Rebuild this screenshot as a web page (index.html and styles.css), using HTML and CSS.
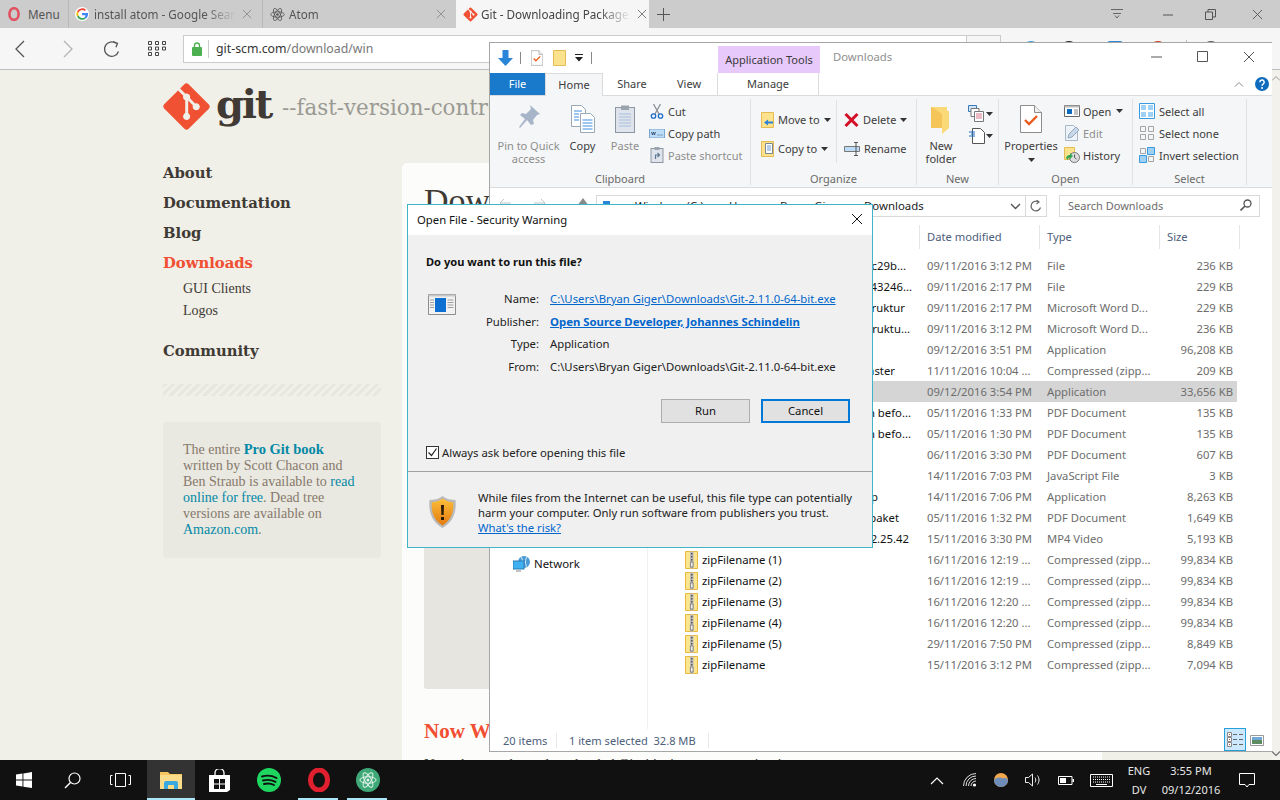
FILE: index.html
```html
<!DOCTYPE html>
<html lang="en">
<head>
<meta charset="utf-8">
<title>Git - Downloading Package</title>
<link rel="stylesheet" href="styles.css">
</head>
<body>
<svg class="defs" xmlns="http://www.w3.org/2000/svg">
  <symbol id="gitlogo" viewBox="0 0 97 97"><path fill="#f05133" d="M92.71 44.408 52.591 4.291c-2.31-2.311-6.057-2.311-8.369 0l-8.33 8.332L46.459 23.19c2.456-.83 5.272-.273 7.229 1.685 1.969 1.97 2.521 4.81 1.67 7.275l10.186 10.185c2.465-.85 5.307-.3 7.275 1.671 2.75 2.75 2.75 7.206 0 9.958-2.752 2.751-7.208 2.751-9.961 0-2.068-2.07-2.58-5.11-1.531-7.658l-9.5-9.499v24.997c.67.332 1.303.774 1.861 1.332 2.75 2.75 2.75 7.206 0 9.959-2.75 2.749-7.209 2.749-9.957 0-2.75-2.754-2.75-7.21 0-9.959.68-.679 1.467-1.193 2.307-1.537v-25.23c-.84-.344-1.625-.853-2.307-1.537-2.083-2.082-2.584-5.14-1.516-7.698L31.798 16.715 4.288 44.222c-2.311 2.313-2.311 6.06 0 8.371l40.121 40.118c2.31 2.311 6.056 2.311 8.369 0L92.71 52.779c2.311-2.311 2.311-6.06 0-8.371z"/></symbol>
  <symbol id="close" viewBox="0 0 12 12"><path d="M1 1l10 10M11 1L1 11" fill="none" stroke="currentColor" stroke-width="1"/></symbol>
  <symbol id="atom" viewBox="0 0 20 20"><g fill="none" stroke="currentColor" stroke-width="1.1"><ellipse cx="10" cy="10" rx="9" ry="3.6"/><ellipse cx="10" cy="10" rx="9" ry="3.6" transform="rotate(60 10 10)"/><ellipse cx="10" cy="10" rx="9" ry="3.6" transform="rotate(120 10 10)"/></g><circle cx="10" cy="10" r="1.7" fill="currentColor"/></symbol>
  <symbol id="zip" viewBox="0 0 13 18"><path d="M.5.5h12v17H.5z" fill="#fbe58f" stroke="#e8b93c"/><path d="M5 .5h3.500v17H5z" fill="#b9b9b9"/><path d="M6 2h1.500v1.600H6zM6 5h1.500v1.600H6zM6 8h1.500v1.600H6z" fill="#555"/><path d="M5.400 11h2.700v5H5.400z" fill="#eee" stroke="#666" stroke-width=".7"/></symbol>
  <symbol id="caret" viewBox="0 0 7 4"><path d="M0 0h7L3.500 4z" fill="#333"/></symbol>
  <symbol id="doccheck" viewBox="0 0 22 28"><path d="M.5.5h14l7 7v20H.5z" fill="#fff" stroke="#8d8d8d"/><path d="M14.500.5v7h7" fill="#eee" stroke="#8d8d8d"/><path d="M5 15l4 4 8-8" fill="none" stroke="#ea5b1c" stroke-width="2.400"/></symbol>
</svg>

<header class="tabstrip">
  <div class="tab tab-menu">
    <svg class="opera-s" width="12" height="14" viewBox="0 0 12 14"><ellipse cx="6" cy="7" rx="4.600" ry="5.800" fill="none" stroke="#e0525f" stroke-width="2.600"/></svg>
    <span class="tab-menu-label">Menu</span>
  </div>
  <div class="tab tab-page">
    <svg class="fav" width="14" height="14" viewBox="0 0 14 14"><circle cx="7" cy="7" r="7" fill="#fff"/><path d="M7 3a4 4 0 0 1 2.700 1L11 2.700A6 6 0 0 0 2 4.300L3.500 5.500A4 4 0 0 1 7 3z" fill="#ea4335"/><path d="M3.500 5.500 2 4.300a6 6 0 0 0 0 5.400l1.500-1.200a4 4 0 0 1 0-3z" fill="#fbbc05"/><path d="M3.500 8.500 2 9.700a6 6 0 0 0 8.800 1.900L9.400 10.400A4 4 0 0 1 3.500 8.500z" fill="#34a853"/><path d="M13 6H7v2.300h3.400a3 3 0 0 1-1 2.100l1.400 1.200A6 6 0 0 0 13 6z" fill="#4285f4"/></svg>
    <span class="tab-title">install atom - Google Search</span>
    <svg class="tab-x" width="10" height="10"><use href="#close"/></svg>
  </div>
  <div class="tab tab-page">
    <svg class="fav fav-atom" width="15" height="15"><use href="#atom"/></svg>
    <span class="tab-title">Atom</span>
    <svg class="tab-x" width="10" height="10"><use href="#close"/></svg>
  </div>
  <div class="tab tab-page tab-active">
    <svg class="fav fav-git" width="15" height="15"><use href="#gitlogo"/></svg>
    <span class="tab-title">Git - Downloading Package</span>
    <svg class="tab-x" width="10" height="10"><use href="#close"/></svg>
  </div>
  <svg class="tab-plus" width="13" height="13" viewBox="0 0 13 13"><path d="M6.500 0v13M0 6.500h13" stroke="#555" fill="none"/></svg>
  <div class="strip-controls">
    <svg class="sc-a" width="14" height="14" viewBox="0 0 14 14"><path d="M1 2.500h12M3 6.500h8M5 8.500l2 2.500 2-2.500" fill="none" stroke="#666"/></svg>
    <svg class="sc-b" width="11" height="11" viewBox="0 0 11 11"><path d="M1 6h10" stroke="#555" fill="none"/></svg>
    <svg class="sc-c" width="11" height="11" viewBox="0 0 11 11"><path d="M.5 3h7v7.500h-7zM3 3V.5h7.500V8H7.500" stroke="#555" fill="none"/></svg>
    <svg class="sc-d" width="11" height="11"><use href="#close"/></svg>
  </div>
</header>

<nav class="toolbar">
  <svg class="tb-back" width="12" height="18" viewBox="0 0 12 18"><path d="M10 1L2 9l8 8" fill="none" stroke="#555" stroke-width="1.300"/></svg>
  <svg class="tb-fwd" width="12" height="18" viewBox="0 0 12 18"><path d="M2 1l8 8-8 8" fill="none" stroke="#b5b5b5" stroke-width="1.300"/></svg>
  <svg class="tb-reload" width="18" height="18" viewBox="0 0 18 18"><path d="M15.500 11.500A7.200 7.200 0 1 1 13 3.300" fill="none" stroke="#555" stroke-width="1.300"/><path d="M10 1.500l4.500 1.800-1.500 4" fill="none" stroke="#555" stroke-width="1.300"/></svg>
  <svg class="tb-grid" width="18" height="15" viewBox="0 0 18 15"><g fill="none" stroke="#444"><path d="M.5.500h3v3h-3zM7.500.5h3v3h-3zM14.500.5h3v3h-3zM.5 6h3v3h-3zM7.500 6h3v3h-3zM14.500 6h3v3h-3zM.5 11.500h3v3h-3zM7.500 11.500h3v3h-3z"/></g></svg>
  <div class="addr">
    <svg class="lock" width="10" height="14" viewBox="0 0 10 14"><path d="M2.500 6V3.500a2.500 2.500 0 0 1 5 0V6" fill="none" stroke="#4caf50" stroke-width="1.300"/><rect y="5" width="10" height="9" rx="1" fill="#4caf50"/></svg>
    <span class="addr-sep"></span>
    <span class="addr-host">git-scm.com</span><span class="addr-path">/download/win</span>
    <svg class="addr-dot" width="14" height="14" viewBox="0 0 14 14"><circle cx="7" cy="7" r="6" fill="#2e86d0"/></svg>
  </div>
  <div class="addr-box"><svg width="20" height="14" viewBox="0 0 20 14"><path d="M1 7c3-6 15-6 18 0" fill="none" stroke="#555" stroke-width="1.500"/></svg></div>
  <div class="ext-icons">
    <span class="ext ext-a"></span><span class="ext ext-b"></span><span class="ext ext-c"></span><span class="ext ext-d"></span><span class="ext-sep"></span><span class="ext ext-e"></span>
  </div>
</nav>

<main class="page">
  <aside class="side">
    <div class="brand">
      <svg class="brand-logo" width="49" height="49"><use href="#gitlogo"/></svg>
      <span class="wordmark">git</span>
      <span class="tagline">--fast-version-control</span>
    </div>
    <ul class="side-nav">
      <li>About</li>
      <li>Documentation</li>
      <li>Blog</li>
      <li class="cur">Downloads</li>
      <li class="sub">GUI Clients</li>
      <li class="sub">Logos</li>
      <li class="comm">Community</li>
    </ul>
    <div class="stripe"></div>
    <div class="book">The entire <a class="strong">Pro Git book</a> written by Scott Chacon and Ben Straub is available to <a>read online for free</a>. Dead tree versions are available on <a>Amazon.com</a>.</div>
  </aside>
  <section class="card">
    <h1>Downloading Git</h1>
    <div class="grey-box"></div>
    <h2>Now What?</h2>
    <p>Now that you have downloaded Git, it's time to start using it.</p>
  </section>
  <div class="page-rest"></div>
  <div class="scroll">
    <svg width="8" height="5" viewBox="0 0 8 5"><path d="M0 4.500l4-4 4 4" fill="none" stroke="#999"/></svg>
    <svg width="8" height="5" viewBox="0 0 8 5"><path d="M0 .5l4 4 4-4" fill="none" stroke="#777" stroke-width="1.300"/></svg>
  </div>
</main>

<footer class="taskbar">
  <div class="tb-item">
    <svg width="16" height="16" viewBox="0 0 16 16"><path d="M0 2.400 6.500 1.500V7.500H0zM7.400 1.400 16 0V7.500H7.400zM0 8.500H6.500V14.500L0 13.600zM7.400 8.500H16V16L7.400 14.700z" fill="#fff"/></svg>
  </div>
  <div class="tb-item">
    <svg width="17" height="17" viewBox="0 0 17 17"><circle cx="10.500" cy="6.500" r="5.500" fill="none" stroke="#fff" stroke-width="1.200"/><path d="M6.500 10.500 1 16" stroke="#fff" stroke-width="1.400"/></svg>
  </div>
  <div class="tb-item">
    <svg width="21" height="14" viewBox="0 0 21 14"><path d="M5.500.5h10v13h-10zM2.500 2.500H.5v9h2M18.500 2.500h2v9h-2" fill="none" stroke="#fff"/></svg>
  </div>
  <div class="tb-item tb-active">
    <svg width="22" height="19" viewBox="0 0 22 19"><path d="M0 1h8l2 2h12v15H0z" fill="#f5c65f"/><path d="M0 4h22v14H0z" fill="#fbdc8a"/><path d="M4 18v-6a2 2 0 0 1 2-2h10a2 2 0 0 1 2 2v6h-4v-4H8v4z" fill="#39a9e0"/></svg>
  </div>
  <div class="tb-item">
    <svg width="21" height="23" viewBox="0 0 21 23"><path d="M0 6h21v15L18 23H0z" fill="#fff"/><path d="M6 8V4a4.500 4.500 0 0 1 9 0v4" fill="none" stroke="#fff" stroke-width="1.300"/><path d="M5 10h5v4.500H5zM11 10h5v4.500h-5zM5 15.500h5V20H5zM11 15.500h5V20h-5z" fill="#111"/></svg>
  </div>
  <div class="tb-item tb-wide">
    <svg width="24" height="24" viewBox="0 0 24 24"><circle cx="12" cy="12" r="12" fill="#1ed760"/><path d="M5 8.500c5-1.500 10-1 14.500 1.500M6 12.500c4.500-1.200 8.500-.8 12.500 1.300M7 16c3.500-.9 7-.6 10 1" fill="none" stroke="#111" stroke-width="1.900" stroke-linecap="round"/></svg>
  </div>
  <div class="tb-item tb-run">
    <svg width="22" height="24" viewBox="0 0 22 24"><ellipse cx="11" cy="12" rx="8.500" ry="10" fill="none" stroke="#e0202e" stroke-width="5"/></svg>
  </div>
  <div class="tb-item tb-run">
    <svg class="tb-atom" width="24" height="24" viewBox="0 0 24 24"><circle cx="12" cy="12" r="12" fill="#3fa877"/><svg x="3" y="3" width="18" height="18"><use href="#atom"/></svg></svg>
  </div>
  <div class="tray">
    <svg class="t-a" width="14" height="9" viewBox="0 0 14 9"><path d="M1 8l6-6 6 6" fill="none" stroke="#fff" stroke-width="1.200"/></svg>
    <svg class="t-b" width="14" height="14" viewBox="0 0 14 14"><g fill="none" stroke="#ddd"><path d="M.5 13A12.500 12.500 0 0 1 13 .5M3 13A10 10 0 0 1 13 3M5.500 13A7.500 7.500 0 0 1 13 5.500M8 13A5 5 0 0 1 13 8"/></g><circle cx="11.500" cy="12" r="1.600" fill="#fff"/></svg>
    <svg class="t-c" width="16" height="16" viewBox="0 0 16 16"><circle cx="8" cy="8" r="7" fill="#f2a94e"/><path d="M1 8a7 7 0 0 0 14 0c-2-2-3-3-5-1.500C8 5 4 5 1 8z" fill="#6e8dbb"/></svg>
    <svg class="t-d" width="17" height="14" viewBox="0 0 17 14"><path d="M.5 4.500h3l4-3.500v12l-4-3.500h-3zM10 4.500c1 1.500 1 3.500 0 5M12.500 2.500c2 3 2 6 0 9" fill="none" stroke="#eee"/></svg>
    <svg class="t-e" width="16" height="9" viewBox="0 0 16 9"><path d="M.5.500h13.500v8H.5z" fill="none" stroke="#fff"/><path d="M2 2h6v5H2z" fill="#fff"/><path d="M14.500 3H16v3h-1.500z" fill="#fff"/></svg>
    <svg class="t-f" width="23" height="13" viewBox="0 0 23 13"><path d="M.5.500h22v12H.5z" fill="none" stroke="#fff"/><path d="M3 3h17M3 5.500h17M3 8h17" stroke="#fff" stroke-dasharray="1 1"/><path d="M6 10.500h11" stroke="#fff"/></svg>
    <div class="t-lang"><span>ENG</span><span>DV</span></div>
    <div class="t-clock"><span>3:55 PM</span><span>09/12/2016</span></div>
    <svg class="t-n" width="16" height="15" viewBox="0 0 16 15"><path d="M.5.500h15v11H10l-2 2.500-2-2.500H.5z" fill="none" stroke="#fff"/></svg>
  </div>
</footer>

<!-- File Explorer window -->
<section class="explorer">
  <div class="ex-title">
    <div class="qat">
      <svg class="q-arrow" width="15" height="16" viewBox="0 0 15 16"><path d="M4.500 0h6v8H15l-7.500 8L0 8h4.500z" fill="#2a84d8"/></svg>
      <span class="q-sep"></span>
      <svg class="q-doc" width="12" height="16"><use href="#doccheck"/></svg>
      <svg class="q-fold" width="13" height="16" viewBox="0 0 13 16"><path d="M.5.500h12v15H.5z" fill="#fde28d" stroke="#e3bd54"/></svg>
      <svg class="q-drop" width="8" height="8" viewBox="0 0 8 8"><path d="M0 0h8v1H0zM0 3h8L4 7.500z" fill="#222"/></svg>
      <span class="q-sep q-sep2"></span>
    </div>
    <div class="ctx-label">Application Tools</div>
    <div class="win-name">Downloads</div>
    <div class="win-ctl">
      <svg width="11" height="11" viewBox="0 0 11 11"><path d="M0 6h11" stroke="#555" fill="none"/></svg>
      <svg width="11" height="11" viewBox="0 0 11 11"><path d="M.5.500h10v10H.5z" stroke="#555" fill="none"/></svg>
      <svg class="ex-x" width="12" height="12"><use href="#close"/></svg>
    </div>
  </div>
  <div class="ex-tabs">
    <span class="rt rt-file">File</span>
    <span class="rt rt-home">Home</span>
    <span class="rt rt-share">Share</span>
    <span class="rt rt-view">View</span>
    <span class="rt rt-manage">Manage</span>
    <svg class="rt-up" width="10" height="6" viewBox="0 0 10 6"><path d="M1 5.500l4-4 4 4" fill="none" stroke="#888"/></svg>
    <svg class="rt-help" width="14" height="14" viewBox="0 0 14 14"><circle cx="7" cy="7" r="7" fill="#0f6cbd"/><path d="M4.800 5.200a2.200 2.200 0 1 1 3.300 1.900c-.8.500-1.100.8-1.100 1.700" fill="none" stroke="#fff" stroke-width="1.500"/><circle cx="7" cy="11" r="1" fill="#fff"/></svg>
  </div>
  <div class="ribbon">
    <div class="grp grp-clip">
      <div class="grp-body">
        <div class="big big-pin dim">
          <div class="big-ic"><svg width="22" height="24" viewBox="0 0 22 24"><path d="M12 0l10 9-3 1-4 5 1 4-3 1-4-5-7 8-1-1 6-8-5-4 2-2 4 1 5-5z" fill="#a7b5c9"/></svg></div>
          <span>Pin to Quick</span><span>access</span>
        </div>
        <div class="big big-copy">
          <div class="big-ic"><svg width="24" height="28" viewBox="0 0 24 28"><path d="M.5.500h10l4 4v17H.5z" fill="#fff" stroke="#9aa7b5"/><path d="M9.500 8.500h10l4 4v15h-14z" fill="#fff" stroke="#9aa7b5"/><path d="M3 6h8M3 9h5M3 12h5M3 15h5M11.500 15h10M11.500 18h10M11.500 21h10M11.500 24h10" stroke="#3f8fe0"/></svg></div>
          <span>Copy</span>
        </div>
        <div class="big big-paste dim">
          <div class="big-ic"><svg width="20" height="28" viewBox="0 0 20 28"><rect x=".5" y="2.500" width="19" height="25" fill="#dfe4ec" stroke="#8d97a3"/><rect x="6" y=".5" width="8" height="4.500" fill="#9ba4ae"/><path d="M4 9h12M4 12h12M4 15h12M4 18h12M4 21h12" stroke="#a9bddb"/></svg></div>
          <span>Paste</span>
        </div>
        <div class="small-list">
          <div class="sm"><svg width="15" height="16" viewBox="0 0 15 16"><path d="M4 1l5.500 10M11 1L5.500 11" stroke="#8a8f96" stroke-width="1.300" fill="none"/><circle cx="4" cy="13" r="2.200" fill="none" stroke="#1e6fc8" stroke-width="1.300"/><circle cx="11" cy="13" r="2.200" fill="none" stroke="#1e6fc8" stroke-width="1.300"/></svg><span>Cut</span></div>
          <div class="sm"><svg width="15" height="9" viewBox="0 0 15 9"><rect width="15" height="9" fill="#bcdcf7" stroke="#7aa7d0"/><path d="M2 3l1 3 1-3 1 3 1-3M8 6h1M10 6h1M12 6h1" stroke="#25405e" fill="none" stroke-width=".8"/></svg><span>Copy path</span></div>
          <div class="sm dim"><svg width="13" height="16" viewBox="0 0 13 16"><rect x=".5" y="1.500" width="12" height="14" fill="#dfe4ec" stroke="#8d97a3"/><rect x="4" width="5" height="3" fill="#9ba4ae"/><path d="M5 12V8h4M7 6l2 2-2 2" stroke="#5d7895" fill="none" stroke-width="1.200"/></svg><span>Paste shortcut</span></div>
        </div>
      </div>
      <div class="grp-label">Clipboard</div>
    </div>
    <div class="grp grp-org">
      <div class="grp-body">
        <div class="org-col org-a">
          <div class="org"><svg width="13" height="16" viewBox="0 0 13 16"><path d="M.5.500h12v15H.5z" fill="#fde28d" stroke="#e3bd54"/><path d="M3 10.500l4-3v2h5v2H7v2z" fill="#2a84d8"/></svg><span>Move to</span><svg width="7" height="4"><use href="#caret"/></svg></div>
          <div class="org"><svg width="13" height="16" viewBox="0 0 13 16"><path d="M.5.500h12v15H.5z" fill="#fde28d" stroke="#e3bd54"/><path d="M4.500 2.500h7v10h-7z" fill="#fff" stroke="#7a8694"/><path d="M6 5h4M6 7h4M6 9h4" stroke="#6d9ad0"/></svg><span>Copy to</span><svg width="7" height="4"><use href="#caret"/></svg></div>
        </div>
        <div class="org-col org-b">
          <div class="org"><svg width="15" height="14" viewBox="0 0 15 14"><path d="M1.500 1l12 12M13.500 1l-12 12" stroke="#d3122a" stroke-width="3" fill="none"/></svg><span>Delete</span><svg width="7" height="4"><use href="#caret"/></svg></div>
          <div class="org"><svg width="16" height="14" viewBox="0 0 16 14"><path d="M.5 4.500h15v5H.5z" fill="#bcdcf7" stroke="#777"/><path d="M12 0v14M10 .5h4M10 13.500h4" stroke="#555" fill="none"/></svg><span>Rename</span></div>
        </div>
      </div>
      <div class="grp-label">Organize</div>
    </div>
    <div class="grp grp-new">
      <div class="grp-body">
        <div class="big big-new">
          <div class="big-ic big-ic-n"><svg width="20" height="27" viewBox="0 0 20 27"><path d="M0 0h16v4h2v17l-7 6V21H0z" fill="#fbd977"/><path d="M11 27V7L4 2 0 0v21h11" fill="#f5c55a"/></svg></div>
          <span>New</span><span>folder</span>
        </div>
        <div class="new-small">
          <div class="ns"><svg width="17" height="17" viewBox="0 0 17 17"><path d="M.5.500h8v6h-8z" fill="#cfe6fa" stroke="#3a7bb8"/><path d="M3 3.500h8v8H3z" fill="#fff" stroke="#777"/><path d="M6.500 6.500h9v10h-9z" fill="#fff" stroke="#777"/><path d="M8 9h6M8 11h6M8 13h6" stroke="#d9768b"/></svg><svg width="7" height="4"><use href="#caret"/></svg></div>
          <div class="ns"><svg width="17" height="16" viewBox="0 0 17 16"><path d="M4.500.5h8l4 4v11h-12z" fill="#fff" stroke="#555"/><path d="M1 4h6M3 6h4M1 8h6" stroke="#1e6fc8"/></svg><svg width="7" height="4"><use href="#caret"/></svg></div>
        </div>
      </div>
      <div class="grp-label">New</div>
    </div>
    <div class="grp grp-open">
      <div class="grp-body">
        <div class="big big-prop">
          <div class="big-ic"><svg width="22" height="28"><use href="#doccheck"/></svg></div>
          <span>Properties</span>
          <svg class="prop-caret" width="7" height="4"><use href="#caret"/></svg>
        </div>
        <div class="small-list">
          <div class="sm"><svg width="16" height="12" viewBox="0 0 16 12"><path d="M.5.500h15v11H.5z" fill="#fff" stroke="#666"/><path d="M.5.500h15v2H.5z" fill="#bbb"/><path d="M3 4h5v5H3z" fill="#0f6cbd"/><path d="M10 5h4M10 7h4M10 9h4" stroke="#888"/></svg><span>Open</span><svg class="sm-caret" width="7" height="4"><use href="#caret"/></svg></div>
          <div class="sm dim"><svg width="14" height="16" viewBox="0 0 14 16"><path d="M.5.500h8l4 4v11H.5z" fill="#eef3f9" stroke="#aab7c6"/><path d="M3 13l1-4 7-7 3 3-7 7z" fill="#c8d8ea" stroke="#93a8c0"/></svg><span>Edit</span></div>
          <div class="sm"><svg width="16" height="16" viewBox="0 0 16 16"><path d="M.5.500h10v12H.5z" fill="#fde28d" stroke="#e3bd54"/><circle cx="10.500" cy="10.500" r="5" fill="#ddd" stroke="#777"/><path d="M10.500 7.500v3l2 1.500" stroke="#555" fill="none"/><path d="M2 11a4 4 0 0 1 4-3v-2l3 3-3 3v-2a3 3 0 0 0-2 3z" fill="#2fa84f"/></svg><span>History</span></div>
        </div>
      </div>
      <div class="grp-label">Open</div>
    </div>
    <div class="grp grp-sel">
      <div class="grp-body">
        <div class="small-list">
          <div class="sm"><svg width="16" height="16" viewBox="0 0 16 16"><path d="M.5.500h15v15H.5z" fill="#fff" stroke="#3a9ae0"/><path d="M2 2h5v5H2zM9 2h5v5H9zM2 9h5v5H2zM9 9h5v5H9z" fill="#9fd0f5"/></svg><span>Select all</span></div>
          <div class="sm"><svg width="16" height="16" viewBox="0 0 16 16"><path d="M1.500 1.500h5v5h-5zM9.500 1.500h5v5h-5zM1.500 9.500h5v5h-5zM9.500 9.500h5v5h-5z" fill="none" stroke="#a5a5a5"/></svg><span>Select none</span></div>
          <div class="sm"><svg width="16" height="16" viewBox="0 0 16 16"><path d="M1.500 1.500h5v5h-5zM9.500 9.500h5v5h-5z" fill="none" stroke="#a5a5a5"/><path d="M8.500.5h7v7h-7zM.5 8.500h7v7h-7z" fill="#9fd0f5" stroke="#3a9ae0"/></svg><span>Invert selection</span></div>
        </div>
      </div>
      <div class="grp-label">Select</div>
    </div>
  </div>
  <div class="ex-nav">
    <svg class="nv-back" width="12" height="10" viewBox="0 0 12 10"><path d="M5 1L1 5l4 4M1 5h11" fill="none" stroke="#c4c4c4"/></svg>
    <svg class="nv-fwd" width="12" height="10" viewBox="0 0 12 10"><path d="M7 1l4 4-4 4M11 5H0" fill="none" stroke="#c4c4c4"/></svg>
    <svg class="nv-up" width="12" height="8" viewBox="0 0 12 8"><path d="M6 0l6 8H0z" fill="#8a8a8a"/></svg>
    <div class="path"><svg class="path-ic" width="7" height="10" viewBox="0 0 7 10"><rect width="7" height="10" fill="#2a84d8"/></svg><div class="crumb"><span>«</span><span>Windows (C:)</span><span>›</span><span>Users</span><span>›</span><span>Bryan Giger</span><span>›</span><span>Downloads</span></div><svg class="path-chev" width="11" height="7" viewBox="0 0 11 7"><path d="M1 1l4.500 4.500L10 1" fill="none" stroke="#555" stroke-width="1.400"/></svg></div>
    <div class="refresh"><svg width="12" height="12" viewBox="0 0 12 12"><path d="M10.500 7.500A4.800 4.800 0 1 1 8.500 2" fill="none" stroke="#666" stroke-width="1.200"/><path d="M6.500 0l2.500 2-2.500 2" fill="none" stroke="#666" stroke-width="1.200"/></svg></div>
    <div class="search"><span>Search Downloads</span><svg width="12" height="12" viewBox="0 0 12 12"><circle cx="7.500" cy="4.500" r="3.500" fill="none" stroke="#555" stroke-width="1.300"/><path d="M5 7L.5 11.500" stroke="#555" stroke-width="1.600"/></svg></div>
  </div>
  <div class="ex-main">
    <div class="pane">
      <div class="pane-item"><svg width="18" height="16" viewBox="0 0 18 16"><circle cx="11" cy="6" r="6" fill="#4a9ad4"/><path d="M8 1c2 2 2 8 0 10M14 1c-2 2-2 8 0 10" fill="none" stroke="#d6ecfa"/><rect y="5" width="11" height="8" fill="#3fb0f0" stroke="#2b7cb5"/><path d="M3 15h5" stroke="#888"/></svg><span>Network</span></div>
    </div>
    <div class="list">
      <div class="lhead"><span class="c-name"></span><span class="c-date">Date modified</span><span class="c-type">Type</span><span class="c-size">Size</span></div>
      <div class="rows">
        <div class="row"><span class="n e-1">report-c29b...</span><span>09/11/2016 3:12 PM</span><span>File</span><span class="s">236 KB</span></div>
        <div class="row"><span class="n e-2">report-43246...</span><span>09/11/2016 2:17 PM</span><span>File</span><span class="s">229 KB</span></div>
        <div class="row"><span class="n e-3">Laporan Struktur</span><span>09/11/2016 2:17 PM</span><span>Microsoft Word D...</span><span class="s">229 KB</span></div>
        <div class="row"><span class="n e-4">Laporan Struktu...</span><span>09/11/2016 3:12 PM</span><span>Microsoft Word D...</span><span class="s">236 KB</span></div>
        <div class="row"><span class="n e-5"></span><span>09/12/2016 3:51 PM</span><span>Application</span><span class="s">96,208 KB</span></div>
        <div class="row"><span class="n e-6">atom-master</span><span>11/11/2016 10:04 ...</span><span>Compressed (zipp...</span><span class="s">209 KB</span></div>
        <div class="row row-sel"><span class="n e-5"></span><span>09/12/2016 3:54 PM</span><span>Application</span><span class="s">33,656 KB</span></div>
        <div class="row"><span class="n e-7">Tugas pertemuan befo...</span><span>05/11/2016 1:33 PM</span><span>PDF Document</span><span class="s">135 KB</span></div>
        <div class="row"><span class="n e-7">Tugas pertemuan befo...</span><span>05/11/2016 1:30 PM</span><span>PDF Document</span><span class="s">135 KB</span></div>
        <div class="row"><span class="n e-5"></span><span>06/11/2016 3:30 PM</span><span>PDF Document</span><span class="s">607 KB</span></div>
        <div class="row"><span class="n e-5"></span><span>14/11/2016 7:03 PM</span><span>JavaScript File</span><span class="s">3 KB</span></div>
        <div class="row"><span class="n e-8">AtomSetup</span><span>14/11/2016 7:06 PM</span><span>Application</span><span class="s">8,263 KB</span></div>
        <div class="row"><span class="n e-9">Materi paket</span><span>05/11/2016 1:32 PM</span><span>PDF Document</span><span class="s">1,649 KB</span></div>
        <div class="row"><span class="n e-10">2016-11-15 22.25.42</span><span>15/11/2016 3:30 PM</span><span>MP4 Video</span><span class="s">5,193 KB</span></div>
        <div class="row"><span class="n z"><svg width="13" height="18"><use href="#zip"/></svg>zipFilename (1)</span><span>16/11/2016 12:19 ...</span><span>Compressed (zipp...</span><span class="s">99,834 KB</span></div>
        <div class="row"><span class="n z"><svg width="13" height="18"><use href="#zip"/></svg>zipFilename (2)</span><span>16/11/2016 12:19 ...</span><span>Compressed (zipp...</span><span class="s">99,834 KB</span></div>
        <div class="row"><span class="n z"><svg width="13" height="18"><use href="#zip"/></svg>zipFilename (3)</span><span>16/11/2016 12:20 ...</span><span>Compressed (zipp...</span><span class="s">99,834 KB</span></div>
        <div class="row"><span class="n z"><svg width="13" height="18"><use href="#zip"/></svg>zipFilename (4)</span><span>16/11/2016 12:20 ...</span><span>Compressed (zipp...</span><span class="s">99,834 KB</span></div>
        <div class="row"><span class="n z"><svg width="13" height="18"><use href="#zip"/></svg>zipFilename (5)</span><span>29/11/2016 7:50 PM</span><span>Compressed (zipp...</span><span class="s">8,849 KB</span></div>
        <div class="row"><span class="n z"><svg width="13" height="18"><use href="#zip"/></svg>zipFilename</span><span>15/11/2016 3:12 PM</span><span>Compressed (zipp...</span><span class="s">7,094 KB</span></div>
      </div>
    </div>
  </div>
  <div class="ex-status">
    <span class="st st-a">20 items</span>
    <span class="st st-b">1 item selected&nbsp; 32.8 MB</span>
    <div class="views">
      <span class="view-on"><svg width="17" height="15" viewBox="0 0 17 15"><path d="M.5.500h4v4h-4zM.5 5.500h4v4h-4zM.5 10.500h4v4h-4z" fill="#fff" stroke="#888"/><path d="M6 2.500h4M12 2.500h4M6 7.500h4M12 7.500h4M6 12.500h4M12 12.500h4" stroke="#666"/><path d="M2 2h1v1H2zM2 7h1v1H2zM2 12h1v1H2z" fill="#c44"/></svg></span>
      <svg width="14" height="11" viewBox="0 0 14 11"><path d="M.5.500h13v10H.5z" fill="#fff" stroke="#999"/><path d="M2 2h10v3H2z" fill="#6ea9d8"/><path d="M2 5h10v4H2z" fill="#5c8a63"/></svg>
    </div>
  </div>
</section>

<!-- Security warning dialog -->
<section class="dialog">
  <div class="dlg-title"><span>Open File - Security Warning</span><svg width="12" height="12"><use href="#close"/></svg></div>
  <div class="dlg-main">
    <div class="dlg-q">Do you want to run this file?</div>
    <div class="dlg-info">
      <svg class="dlg-app" width="28" height="21" viewBox="0 0 28 21"><path d="M.5.500h27v20H.5z" fill="#f2f2f2" stroke="#8d8d8d"/><path d="M.5.500h27v2H.5z" fill="#c8c8c8"/><path d="M7 4h11v14H7z" fill="#0d6fd1"/><path d="M2 6h4M2 8.500h4M2 11h4M2 13.500h4M19.500 6h6M19.500 8.500h6M19.500 11h6M19.500 13.500h6" stroke="#9c9c9c"/></svg>
      <div class="dlg-grid">
        <span class="lb">Name:</span><a class="val">C:\Users\Bryan Giger\Downloads\Git-2.11.0-64-bit.exe</a>
        <span class="lb">Publisher:</span><a class="val val-b">Open Source Developer, Johannes Schindelin</a>
        <span class="lb">Type:</span><span class="val">Application</span>
        <span class="lb">From:</span><span class="val">C:\Users\Bryan Giger\Downloads\Git-2.11.0-64-bit.exe</span>
      </div>
    </div>
    <div class="dlg-btns"><button class="btn">Run</button><button class="btn btn-def">Cancel</button></div>
    <label class="dlg-check"><span class="box"><svg width="11" height="11" viewBox="0 0 11 11"><path d="M1.500 5.500l3 3 5-7" fill="none" stroke="#222" stroke-width="1.200"/></svg></span>Always ask before opening this file</label>
  </div>
  <div class="dlg-warn">
    <svg class="shield" width="27" height="32" viewBox="0 0 27 32"><defs><linearGradient id="sh" x1="0" y1="0" x2="0" y2="1"><stop offset="0" stop-color="#fbbf3a"/><stop offset="1" stop-color="#e47a10"/></linearGradient></defs><path d="M13.500 0C10 3 5 4 .5 4c-1 10 1 21 13 28 12-7 14-18 13-28C22 4 17 3 13.500 0z" fill="#b9b9b9"/><path d="M13.500 2.500C10.500 5 6.500 6 2.800 6.200c-.6 8.500 1.200 17.500 10.700 23.300 9.500-5.800 11.300-14.800 10.700-23.300C20.500 6 16.500 5 13.500 2.500z" fill="url(#sh)"/><path d="M12 9h3l-.4 10h-2.200zM12 21h3v3h-3z" fill="#2a1a05"/></svg>
    <div class="warn-text">While files from the Internet can be useful, this file type can potentially<br>harm your computer. Only run software from publishers you trust.<br><a>What's the risk?</a></div>
  </div>
</section>
</body>
</html>
```

FILE: styles.css
```css
* { box-sizing: border-box; }
html, body { margin: 0; padding: 0; }
body {
  width: 1280px; height: 800px; overflow: hidden; position: relative;
  display: flex; flex-direction: column;
  font-family: "Noto Sans", "Open Sans", sans-serif; font-size: 12px; color: #1e1e1e;
  background: #f0efe8;
}
svg { display: block; flex: none; }
.defs { display: none; }

/* Tab strip */
.tabstrip { height: 28px; flex: none; display: flex; align-items: stretch; background: #cccccc; }
.tab { display: flex; align-items: center; font-size: 11.7px; color: #555; }
.tab-menu { width: 69px; padding-left: 8px; border-right: 1px solid #b8b8b8; }
.tab-menu-label { margin-left: 8px; }
.tab-page { width: 194px; padding-left: 6px; border-right: 1px solid #b8b8b8; position: relative; }
.fav { margin-right: 5px; }
.fav-atom { color: #555; margin-left: 1px; margin-right: 4px; }
.fav-git { margin-right: 3px; }
.tab-title { flex: 1; white-space: nowrap; overflow: hidden; -webkit-mask-image: linear-gradient(90deg, #000 78%, transparent 100%); mask-image: linear-gradient(90deg, #000 78%, transparent 100%); padding-right: 4px; }
.tab-x { margin: 0 10px 0 6px; color: #888; }
.tab-active { background: #f6f6f6; color: #444; width: 193px; border-right: 0; margin-left: -1px; padding-left: 7px; }
.tab-active .tab-x { color: #666; margin-right: 2px; }
.tab-plus { align-self: center; margin-left: 8px; }
.strip-controls { margin-left: auto; display: flex; align-items: center; padding-right: 17px; color: #555; }
.sc-b { margin-left: 38px; }
.sc-c { margin-left: 32px; }
.sc-d { margin-left: 36px; }

/* Toolbar */
.toolbar { height: 42px; flex: none; display: flex; align-items: center; background: #f6f6f6; border-bottom: 1px solid #bdbdbd; padding-left: 14px; }
.tb-fwd { margin-left: 36px; }
.tb-reload { margin-left: 29px; }
.tb-grid { margin-left: 27px; }
.addr { margin-left: 17px; width: 784px; height: 28px; background: #fff; border: 1px solid #ccc; display: flex; align-items: center; padding-left: 8px; font-size: 12.3px; }
.addr-sep { width: 1px; height: 18px; background: #ccc; margin: 0 7px 0 6px; }
.addr-host { color: #333; }
.addr-path { color: #777; }
.addr-dot { margin-left: auto; margin-right: 6px; }
.addr-box { width: 34px; height: 28px; border: 1px solid #ccc; border-left: 0; background: #f6f6f6; display: flex; align-items: center; justify-content: center; }
.ext-icons { display: flex; align-items: center; margin-left: 22px; }
.ext { width: 16px; height: 16px; border-radius: 50%; margin-right: 22px; }
.ext-a { background: #3a97d4; }
.ext-b { background: #222; margin-right: 30px; }
.ext-c { background: #2e86d0; border-radius: 3px; margin-right: 27px; }
.ext-d { background: #d9331c; margin-right: 20px; }
.ext-sep { width: 1px; height: 18px; background: #bbb; margin-right: 16px; }
.ext-e { background: #fff; border: 2px solid #555; margin-right: 0; }

/* Browser page */
.page { flex: 1; min-height: 0; display: grid; grid-template-columns: 402px 700px 1fr 8px; background: #f0efe8; overflow: hidden; }
.side { padding-left: 163px; padding-right: 21px; font-family: "Liberation Serif", serif; }
.brand { display: flex; align-items: center; height: 47px; margin-top: 13px; white-space: nowrap; }
.brand-logo { margin-left: -1px; margin-right: -1px; }
.wordmark { font-family: "DejaVu Serif", serif; font-size: 40px; font-weight: 700; color: #413934; letter-spacing: -2.2px; margin-left: 6px; width: 56px; line-height: 47px; margin-bottom: 6px; }
.tagline { font-family: "DejaVu Serif", serif; font-size: 21.4px; color: #9a9a94; margin-left: 11px; margin-top: 2px; }
.side-nav { list-style: none; margin: 28px 0 0; padding: 0; font-family: "DejaVu Serif", serif; font-size: 14.8px; font-weight: 700; color: #3f3a34; }
.side-nav li { height: 30px; line-height: 30px; }
.side-nav .cur { color: #f14e32; }
.side-nav .sub { font-family: "Liberation Serif", serif; font-size: 14px; font-weight: 400; height: 22px; line-height: 22px; padding-left: 20px; }
.side-nav .comm { margin-top: 14px; }
.stripe { height: 12px; margin-top: 18px; background: repeating-linear-gradient(135deg, #e8e7df 0 3px, transparent 3px 6px); }
.book { margin-top: 26px; height: 136px; background: #e9e8e1; padding: 19px 20px; font-size: 14px; line-height: 16px; color: #87796b; border-radius: 3px; }
.book a { color: #0388a6; }
.book .strong { font-weight: 700; font-size: 14.5px; }
.card { background: #fcfcfa; margin-top: 93px; border-radius: 5px 0 0 0; padding: 15px 0 0 22px; font-family: "Liberation Serif", serif; overflow: hidden; }
.card h1 { margin: 0; font-size: 34px; line-height: 46px; font-weight: 400; color: #3f3a34; white-space: nowrap; }
.grey-box { margin-top: 26px; height: 439px; background: #e6e5df; border-radius: 3px; width: 660px; }
.card h2 { margin: 27px 0 0; font-size: 21px; line-height: 30px; color: #f14e32; font-weight: 700; }
.card p { margin: 8px 0 0; font-size: 15px; line-height: 20px; color: #3f3a34; }
.scroll { background: #f2f1ec; display: flex; flex-direction: column; justify-content: space-between; padding: 6px 0 4px; }

/* Taskbar */
.taskbar { height: 40px; flex: none; background: #111; display: flex; align-items: stretch; color: #fff; }
.tb-item { width: 48px; display: flex; align-items: center; justify-content: center; position: relative; }
.tb-item:nth-child(4) { margin-left: 3px; }
.tb-wide { width: 50px; margin-left: 1px; }
.tb-item:nth-child(7), .tb-item:nth-child(8) { width: 49px; }
.tb-active { background: #333; box-shadow: inset 0 -2px 0 #a8e6f8; }
.tb-run::after { content: ""; position: absolute; left: 4px; right: 5px; bottom: 0; height: 2px; background: #a8e6f8; }
.tb-atom { color: #e3f4ea; }
.tray { margin-left: auto; display: flex; align-items: center; padding-right: 25px; font-size: 11px; color: #e8e8e8; }
.t-b { margin-left: 19px; }
.t-c { margin-left: 16px; }
.t-d { margin-left: 15.5px; }
.t-e { margin-left: 16.5px; }
.t-f { margin-left: 15.5px; }
.t-lang { margin-left: 9.5px; width: 34px; display: flex; flex-direction: column; align-items: center; line-height: 19px; }
.t-clock { margin-left: 4px; width: 62px; display: flex; flex-direction: column; align-items: center; line-height: 19px; }
.t-n { margin-left: 17px; }

/* Explorer window */
.explorer { position: absolute; left: 489px; top: 42px; width: 783px; height: 710px; background: #fff; border: 1px solid #a6a6a6; border-right: 0; display: flex; flex-direction: column; font-size: 11px; }
.ex-title { height: 30px; flex: none; display: flex; }
.qat { width: 228px; display: flex; align-items: center; padding-left: 8px; }
.q-sep { width: 1px; height: 12px; background: #888; margin-left: 7px; }
.q-doc { margin-left: 10px; }
.q-fold { margin-left: 10px; }
.q-drop { margin-left: 9px; }
.q-sep2 { margin-left: 8px; }
.ctx-label { width: 102px; height: 27px; margin-top: 3px; background: #e8c9fb; text-align: center; line-height: 28px; color: #3a3a3a; }
.win-name { margin-left: 13px; line-height: 28px; color: #8f8f8f; font-size: 11.3px; }
.win-ctl { margin-left: auto; display: flex; align-items: center; gap: 35px; padding-right: 17px; padding-bottom: 3px; }
.ex-x { color: #555; }
.ex-tabs { height: 23px; flex: none; display: flex; align-items: stretch; border-bottom: 1px solid #dadbdc; position: relative; }
.rt { display: flex; align-items: center; justify-content: center; color: #3c3c3c; padding-bottom: 1px; }
.rt-file { width: 55px; background: #1979ca; color: #fff; }
.rt-home { width: 58px; background: #f5f6f7; border: 1px solid #dadbdc; border-bottom: 0; margin-bottom: -1px; }
.rt-share { width: 58px; }
.rt-view { width: 56px; }
.rt-manage { width: 102px; border-left: 1px solid #dadbdc; border-right: 1px solid #dadbdc; }
.rt-up { align-self: center; margin-left: auto; margin-right: 11px; }
.rt-help { align-self: center; margin-right: 3px; }
.ribbon { height: 92px; flex: none; background: #f5f6f7; border-bottom: 1px solid #dadbdc; display: flex; color: #3c3c3c; }
.grp { display: flex; flex-direction: column; border-right: 1px solid #e1e2e4; margin: 3px 0 2px; }
.grp-clip { width: 261px; }
.grp-org { width: 166px; }
.grp-new { width: 82px; }
.grp-open { width: 134px; }
.grp-sel { width: 114px; }
.grp-body { flex: 1; display: flex; padding-top: 1px; }
.grp-label { height: 18px; text-align: center; color: #6a6a6a; line-height: 24px; }
.big { display: flex; flex-direction: column; align-items: center; line-height: 13px; white-space: nowrap; }
.big-ic { height: 39px; display: flex; align-items: flex-start; justify-content: center; padding-top: 5px; }
.big-ic-n { padding-top: 7px; }
.dim { color: #8e8e8e; }
.big-pin { width: 63px; margin-left: 7px; }
.big-copy { width: 43px; margin-left: 1px; }
.big-paste { width: 42px; }
.small-list { display: flex; flex-direction: column; margin-left: 3px; }
.sm { height: 22px; display: flex; align-items: center; white-space: nowrap; }
.sm > svg:first-child { width: 16px; margin-right: 3px; }
.sm-caret { margin-left: 5px; }
.org-col { padding-top: 5px; }
.org { height: 29px; display: flex; align-items: center; white-space: nowrap; }
.org > svg:first-child { margin-right: 4px; }
.org > svg:last-child:not(:first-child) { margin: 0 0 0 4px; }
.org-a { margin-left: 10px; width: 76px; border-right: 1px solid #e1e2e4; height: 63px; }
.org-b { margin-left: 7px; }
.big-new { width: 48px; }
.new-small { display: flex; flex-direction: column; margin-left: 3px; padding-top: 5px; gap: 6px; }
.ns { display: flex; align-items: center; gap: 1px; }
.big-prop { width: 64px; }
.prop-caret { margin-top: 6px; }
.grp-open .small-list { margin-left: 1px; }
.grp-sel .small-list { margin-left: 6px; }
.grp-sel .sm > svg:first-child { margin-right: 4px; }
.ex-nav { height: 30px; flex: none; display: flex; align-items: flex-start; padding-top: 7px; color: #3c3c3c; }
.nv-back { margin: 3px 0 0 9px; }
.nv-fwd { margin: 3px 0 0 23px; }
.nv-up { margin: 3px 0 0 31px; }
.path { margin-left: 7px; width: 430px; height: 22px; border: 1px solid #d9d9d9; display: flex; align-items: center; padding-left: 6px; }
.crumb { margin-left: 11px; color: #222; white-space: nowrap; font-size: 11.4px; display: grid; grid-template-columns: 14px 83px 11px 39px 12px 75px 9px auto; margin-bottom: 2px; }
.path-chev { margin-left: auto; margin-right: 4px; }
.refresh { width: 21px; height: 22px; border: 1px solid #d9d9d9; border-left: 0; display: flex; align-items: center; justify-content: center; }
.search { margin-left: 12px; width: 201px; height: 22px; border: 1px solid #d9d9d9; display: flex; align-items: center; justify-content: space-between; padding: 0 7px 2px 8px; color: #6d6d6d; }
.ex-main { flex: 1; min-height: 0; display: flex; }
.pane { width: 158px; border-right: 1px solid #f0f0f0; padding: 335px 0 0 23px; }
.pane-item { display: flex; align-items: center; gap: 3px; height: 21px; font-size: 11.4px; color: #111; }
.list { width: 589px; }
.lhead { display: grid; grid-template-columns: 272px 120px 120px 80px; height: 24px; margin-top: 7px; color: #4c607a; font-size: 11.2px; }
.lhead span { border-right: 1px solid #e5e5e5; padding-left: 7px; line-height: 24px; }
.rows { margin-top: 6px; }
.row { display: grid; grid-template-columns: 272px 120px 120px 76px; height: 21px; line-height: 21px; color: #6d6d6d; font-size: 11.25px; white-space: nowrap; }
.row > span { padding-left: 7px; overflow: hidden; }
.row .s { text-align: right; padding: 0 3px 0 0; }
.row .n { color: #111; font-size: 11.3px; text-align: right; padding-left: 0; }
.row-sel { background: #d5d5d5; }
.e-1 { padding-right: 14px; }
.e-2 { padding-right: 8px; }
.e-3 { padding-right: 15px; }
.e-4 { padding-right: 10px; }
.e-6 { padding-right: 25px; }
.e-7 { padding-right: 9px; }
.e-8 { padding-right: 42px; }
.e-9 { padding-right: 21px; }
.e-10 { padding-right: 11px; }
.row .z { display: flex; align-items: center; gap: 4px; text-align: left; padding-left: 37px; }
.ex-status { height: 22px; flex: none; display: flex; align-items: center; color: #4c607a; font-size: 11.1px; }
.st-a { padding-left: 13px; width: 67px; border-right: 1px solid #e8e8e8; }
.st-b { padding: 0 12px; border-right: 1px solid #e8e8e8; }
.views { margin-left: auto; display: flex; align-items: center; gap: 4px; padding-right: 8px; }
.view-on { width: 22px; height: 23px; background: #cce8ff; border: 1px solid #26a0da; display: flex; align-items: center; justify-content: center; margin-top: -1px; }

/* Dialog */
.dialog { position: absolute; left: 407px; top: 204px; width: 466px; height: 344px; background: #f0f0f0; border: 1px solid #3fb3c8; display: flex; flex-direction: column; font-size: 11.3px; }
.dlg-title { height: 30px; flex: none; background: #fff; display: flex; align-items: center; justify-content: space-between; padding: 0 9px 2px; color: #111; }
.dlg-main { height: 237px; flex: none; padding: 0 18px; border-bottom: 1px solid #a0a0a0; position: relative; }
.dlg-q { font-weight: 700; font-size: 11.1px; margin-top: 18px; line-height: 18px; color: #111; }
.dlg-info { display: flex; margin-top: 17px; }
.dlg-app { margin: 6px 0 0 2px; }
.dlg-grid { display: grid; grid-template-columns: 83px auto; column-gap: 11px; grid-auto-rows: 22.67px; line-height: 22.67px; }
.lb { text-align: right; color: #222; }
.val { color: #222; white-space: nowrap; }
a.val { color: #0066cc; text-decoration: underline; }
.val-b { font-weight: 700; font-size: 11.35px; }
.dlg-btns { display: flex; justify-content: flex-end; gap: 11px; margin-top: 20px; padding-right: 4px; }
.btn { width: 89px; height: 24px; font: inherit; color: #111; background: #e1e1e1; border: 1px solid #adadad; padding: 0; }
.btn-def { border: 2px solid #0078d7; }
.dlg-check { display: flex; align-items: center; margin-top: 22px; gap: 3px; color: #222; }
.box { width: 13px; height: 13px; border: 1px solid #333; background: #fff; display: flex; align-items: center; justify-content: center; }
.dlg-warn { flex: 1; display: flex; padding: 18px 0 0 21px; }
.shield { margin-top: 6px; }
.warn-text { margin-left: 22px; line-height: 15px; color: #222; white-space: nowrap; }
.warn-text a { color: #0066cc; text-decoration: underline; }
```
